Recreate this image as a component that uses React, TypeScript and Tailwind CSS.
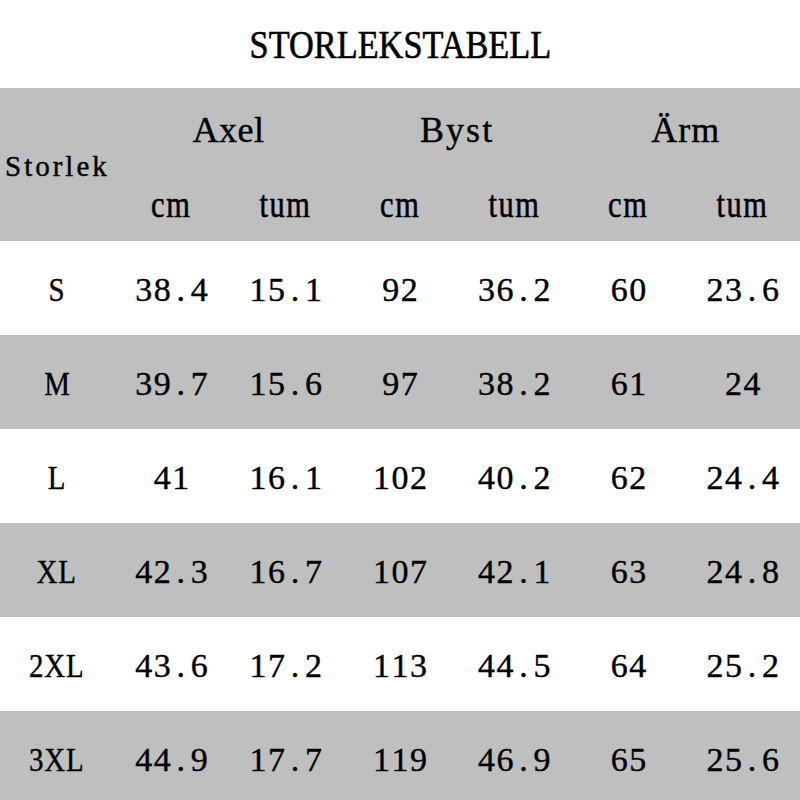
import React from "react";

const rows: string[][] = [
  ["S", "38.4", "15.1", "92", "36.2", "60", "23.6"],
  ["M", "39.7", "15.6", "97", "38.2", "61", "24"],
  ["L", "41", "16.1", "102", "40.2", "62", "24.4"],
  ["XL", "42.3", "16.7", "107", "42.1", "63", "24.8"],
  ["2XL", "43.6", "17.2", "113", "44.5", "64", "25.2"],
  ["3XL", "44.9", "17.7", "119", "46.9", "65", "25.6"],
];

function Num({ v }: { v: string }) {
  return (
    <span className="inline-flex">
      {v.split("").map((c, i) => (
        <span key={i} className="inline-block w-[18.5px] text-center">
          {c}
        </span>
      ))}
    </span>
  );
}

export default function App() {
  return (
    <div
      className="w-[800px] h-[800px] overflow-hidden bg-white text-black [-webkit-text-stroke:0.4px_black]"
      style={{ fontFamily: '"Liberation Serif", "Times New Roman", serif' }}
    >
      <div className="h-[88px] flex justify-center pt-[25px]">
        <span className="inline-block text-[39px] leading-none scale-x-[0.88] h-[39px] [-webkit-text-stroke:0.6px_black]">
          STORLEKSTABELL
        </span>
      </div>
      <div className="h-[153px] bg-[#bfbfbf] grid grid-cols-7 grid-rows-[84px_69px]">
        <div className="row-span-2 flex items-start pl-[5px] pt-[64px] text-[29px] leading-none tracking-[3px]">
          Storlek
        </div>
        <div className="col-span-2 flex items-end justify-center text-[36px] leading-none pb-[24px] tracking-[0.5px]">
          Axel
        </div>
        <div className="col-span-2 flex items-end justify-center text-[36px] leading-none pb-[24px] tracking-[2px]">
          Byst
        </div>
        <div className="col-span-2 flex items-end justify-center text-[36px] leading-none pb-[24px] tracking-[1px]">
          Ärm
        </div>
        {["cm", "tum", "cm", "tum", "cm", "tum"].map((t, i) => (
          <div
            key={i}
            className="flex items-start justify-center text-[38px] leading-none pt-[13px] [-webkit-text-stroke:0.6px_black]"
          >
            <span className="inline-block scale-x-[0.8] tracking-[2px]">{t}</span>
          </div>
        ))}
      </div>
      {rows.map((r, ri) => (
        <div
          key={ri}
          className={`h-[94px] grid grid-cols-7 items-center text-[34px] leading-none ${
            ri % 2 === 1 ? "bg-[#bfbfbf]" : "bg-white"
          }`}
        >
          {r.map((v, ci) => (
            <div key={ci} className="flex justify-center pt-[4px]">
              {ci === 0 ? (
                <span className="inline-block scale-x-[0.85] tracking-[1px]">{v}</span>
              ) : (
                <Num v={v} />
              )}
            </div>
          ))}
        </div>
      ))}
    </div>
  );
}
